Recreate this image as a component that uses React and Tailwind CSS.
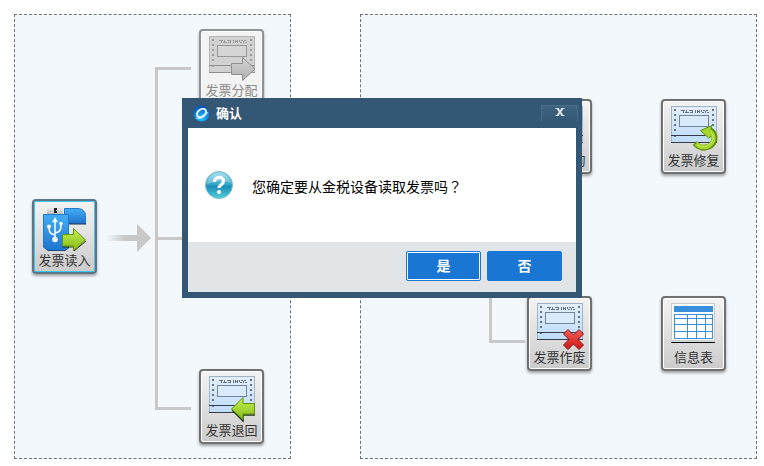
import React from "react";

const HOLES = [8, 13, 18, 23, 28];

function InvoiceSheet({ muted }) {
  const line = muted ? "#8f8f8f" : "#383c48";
  const mark = muted ? "#9c9c9c" : "#687282";
  return (
    <g shapeRendering="crispEdges">
      <rect x="10.5" y="5.5" width="45" height="36" fill={muted ? "#d2d2d2" : "url(#sheet)"} stroke={muted ? "#b5b5b5" : "#9fb2c9"} />
      {HOLES.map((y) => (
        <g key={y} fill={mark}>
          <rect x="13" y={y} width="2" height="2" />
          <rect x="51" y={y} width="2" height="2" />
        </g>
      ))}
      <rect x="13" y="35" width="2" height="1" fill={mark} />
      <path d="M20 9h4v1h-4zM22 10h1v2h-1zM24 11h4v1h-4zM25 9h1v2h-1zM28 9h3v1h-3zM29 11h3v1h-3zM31 9h1v2h-1zM34 9h1v3h-1zM36 9h1v3h-1zM37 10h1v1h-1zM38 9h1v3h-1zM40 9h1v2h-1zM41 11h2v1h-2zM42 9h2v1h-2zM44 10h1v2h-1zM45 9h2v1h-2zM46 11h2v1h-2z" fill={mark} />
      <rect x="18.5" y="14.5" width="29" height="11" fill={muted ? "#d6d6d6" : "#d9eafc"} stroke={muted ? "#989898" : "#74849a"} />
      <path d="M10 34.5h46M10 41.5h46" stroke={line} />
    </g>
  );
}

function Icon({ kind }) {
  return (
    <svg width="65" height="50" viewBox="0 0 65 50" className="block overflow-visible" aria-hidden="true">
      {["assign", "return", "void", "repair", "query"].includes(kind) && <InvoiceSheet muted={kind === "assign"} />}
      {kind === "assign" && (
        <path d="M32.5 32.5h11v-6L56 38 43.500 49.500v-6h-11z" fill="url(#grayArrow)" stroke="#8f8f8f" />
      )}
      {kind === "return" && (
        <g>
          <path d="M33 39l11 11v-6h12" fill="none" stroke="#26331a" strokeWidth="1.500" />
          <path d="M55.500 32.500H44v-6L32.500 38 44 48.500v-5.500h11.500z" fill="url(#green)" stroke="#5f930c" />
        </g>
      )}
      {kind === "void" && (
        <path d="M41 31.500l5.500 5.500 5.500-5.500 4.500 4.500-5.500 5.500 5.500 5.500-4.500 4.500-5.500-5.500-5.500 5.500-4.500-4.500 5.500-5.500-5.500-5.500z" fill="url(#red)" stroke="#8c1010" strokeLinejoin="round" />
      )}
      {kind === "repair" && (
        <g fill="none" strokeLinejoin="round">
          <path d="M34 42c4 5 10 6 15 3 6-4 6-12 0-16" stroke="#5f8f10" strokeWidth="6" />
          <path d="M39.500 29.500L51 24.500l-1.500 4.500 1 6-3 2z" fill="#a5d62c" stroke="#5f8f10" />
          <path d="M35 42.500c4 4 9 5 13.500 2 5.500-4 5.500-11 0-15" stroke="#a5d62c" strokeWidth="4" />
          <path d="M37 44c4 3 9 2 12-1 4-4 4-8 1-12" stroke="#cdee66" strokeWidth="1" />
        </g>
      )}
      {kind === "table" && (
        <g shapeRendering="crispEdges">
          <rect x="10.500" y="5.500" width="43" height="37" fill="#fff" stroke="#c9cdc9" />
          <rect x="13" y="8" width="39" height="6" fill="#378fde" />
          <path d="M13.500 16.500h38v24h-38zM13 20.500h39M13 26.500h39M13 33.500h39M26.500 16v25M35.500 16v25M44.500 16v25" fill="none" stroke="#378fde" />
          <path d="M10 44.500h44" stroke="#000" />
        </g>
      )}
      {kind === "usb" && (
        <g>
          <path d="M15 6h16v9H15z" fill="url(#metal)" />
          <path d="M22 7h3v2h-1v1h1v2h-3z" fill="#222" />
          <path d="M36 22.500h18" stroke="#16304f" strokeWidth="2" />
          <path d="M32.500 7.500H46c4 0 7.500 3 7.500 7v7.500h-21z" fill="url(#blue)" stroke="#2179c9" />
          <path d="M11 42h26v5l-4 3H16l-5-4z" fill="#10294a" />
          <path d="M11.500 13.500h25V44c0 3-2 5-5 5h-14c-3 0-6-2-6-5z" fill="url(#blue)" stroke="#2179c9" />
          <g stroke="#fff" strokeWidth="1.500" fill="none">
            <path d="M23 20v18M23 34c-5-1-6-3-6-8M23 32c5-1 6-3 6-8" />
            <path d="M20.500 21L23 16.500l2.500 4.500zM15.500 24h3v3h-3z" fill="#fff" strokeWidth="0.500" />
            <circle cx="29" cy="22.500" r="1.500" fill="#fff" strokeWidth="0.500" />
            <circle cx="23" cy="38.500" r="2" fill="#fff" />
          </g>
          <path d="M30 46h12v4l12-10" fill="none" stroke="#26331a" />
          <path d="M30.500 33.500h11v-6l12 11.500-12 10.500v-4.500h-11z" fill="url(#green)" stroke="#5f930c" />
        </g>
      )}
    </svg>
  );
}

function IconDefs() {
  const ramps = [
    ["sheet", "#e3effb", "#bedcfb"],
    ["green", "#c8ee54", "#83bd15"],
    ["grayArrow", "#d6d6d6", "#adadad"],
    ["red", "#f3625c", "#cf1111"],
    ["blue", "#43adf4", "#1f76cf"],
    ["metal", "#f2f2f2", "#a9a9a9"],
  ];
  return (
    <svg width="0" height="0" className="absolute" aria-hidden="true">
      <defs>
        {ramps.map(([id, from, to]) => (
          <linearGradient key={id} id={id} x1="0" y1="0" x2="0" y2="1">
            <stop offset="0" stopColor={from} />
            <stop offset="1" stopColor={to} />
          </linearGradient>
        ))}
        <linearGradient id="fade" x1="0" y1="0" x2="1" y2="0">
          <stop offset="0" stopColor="#c8c8c8" stopOpacity="0" />
          <stop offset="0.600" stopColor="#c8c8c8" />
        </linearGradient>
        <radialGradient id="logo" cx="0.500" cy="0.800" r="0.800">
          <stop offset="0" stopColor="#25c3fb" />
          <stop offset="0.600" stopColor="#0d7fe0" />
          <stop offset="1" stopColor="#064cab" />
        </radialGradient>
        <linearGradient id="help" x1="0" y1="0" x2="0" y2="1">
          <stop offset="0" stopColor="#8fd9e8" />
          <stop offset="0.500" stopColor="#2fa3c6" />
          <stop offset="0.550" stopColor="#1b8cb8" />
          <stop offset="1" stopColor="#52d0dc" />
        </linearGradient>
      </defs>
    </svg>
  );
}

function Tile({ kind, label, active, disabled }) {
  const skin = active
    ? "border-[#5e7787] bg-linear-to-b from-[#f3f3f3] from-0% via-[#e2e2e2] via-45% to-[#cbcbcb] inset-ring-1 inset-ring-[#3fc4f3] text-[#333]"
    : disabled
      ? "border-[#8f9396] bg-[#f3f3f3] inset-ring-1 inset-ring-white text-[#8a8a8a]"
      : "border-[#707070] bg-linear-to-b from-[#f3f3f3] from-0% via-[#e2e2e2] via-45% to-[#cbcbcb] inset-ring-1 inset-ring-white text-[#333]";
  return (
    <button type="button" disabled={disabled} className={`h-[75px] w-[65px] shrink-0 rounded-[4px] border-2 shadow-[0_2px_3px_rgba(0,0,0,0.35)] ${skin}`}>
      <span className="-m-[2px] flex flex-col items-center pb-[2px]">
        <Icon kind={kind} />
        <span className="text-[13px] leading-5 whitespace-nowrap">{label}</span>
      </span>
    </button>
  );
}

const PANEL = "flex min-w-0 border border-dashed border-[#6f7377] bg-[#f3f8fd]";

function ConfirmDialog() {
  return (
    <div role="dialog" aria-labelledby="dialog-title" className="absolute inset-x-0 top-[98px] mx-auto w-[400px] bg-[#335775] px-[6px] pb-[6px]">
      <header className="flex h-[30px] items-center pl-[5px]">
        <svg width="17" height="17" viewBox="0 0 17 17" aria-hidden="true">
          <circle cx="8.500" cy="8.500" r="8" fill="url(#logo)" />
          <ellipse cx="8.500" cy="8" rx="5" ry="3.500" transform="rotate(-38 8.500 8)" fill="none" stroke="#fff" strokeWidth="1.800" />
          <path d="M3 13c4 2 9-1 12-6" fill="none" stroke="#bdeeff" />
        </svg>
        <h1 id="dialog-title" className="ml-[6px] flex-1 pt-[2px] text-[13px] leading-5 font-bold text-white">确认</h1>
        <button type="button" aria-label="关闭" className="-mr-[2px] flex h-4 w-[37px] items-center justify-center border-x border-t border-[#4b6d88] bg-linear-to-b from-[#40637f] to-[#335775]">
          <svg width="10" height="8" viewBox="0 0 10 8" className="-mt-1" aria-hidden="true">
            <path d="M0.500 0.500h3.500M6 0.500h3.500M0.500 7.500h3.500M6 7.500h3.500" stroke="#dde3e8" />
            <path d="M2.500 0.500l5 7M7.500 0.500l-5 7" stroke="#dde3e8" strokeWidth="2" />
          </svg>
        </button>
      </header>
      <div className="flex h-[114px] items-center bg-white pl-4">
        <svg width="30" height="30" viewBox="0 0 30 30" aria-hidden="true">
          <circle cx="15" cy="15" r="13.500" fill="url(#help)" stroke="#78bfd2" />
          <path d="M3 14C4 6 9 3 15 3s11 4 12 10c-8-3-16-2-24 1z" fill="#fff" opacity="0.250" />
          <path d="M10.500 12c0-6 9-6 9-1 0 4-4.500 3.500-4.500 7" fill="none" stroke="#fff" strokeWidth="3.200" />
          <circle cx="15" cy="22" r="2" fill="#fff" />
        </svg>
        <p className="ml-[18px] pt-[2px] text-[14px] leading-5 text-black">
          您确定要从金税设备读取发票吗<span className="font-['Noto_Sans_CJK_TC',sans-serif]" lang="zh-TW">？</span>
        </p>
      </div>
      <footer className="flex h-[50px] items-center justify-end gap-[6px] bg-[#e1e5e8] pr-[14px] pb-[2px]">
        <button type="button" className="h-[30px] w-[75px] rounded-[2px] border border-[#1976d2] bg-[#1976d2] text-[14px] leading-5 font-bold text-white inset-ring-1 inset-ring-white">是</button>
        <button type="button" className="h-[30px] w-[75px] rounded-[2px] border border-[#1976d2] bg-[#1976d2] text-[14px] leading-5 font-bold text-white">否</button>
      </footer>
    </div>
  );
}

export default function App() {
  return (
    <div lang="zh-CN" className="relative min-h-screen bg-white py-[14px] pr-[7px] pl-[14px] font-['Liberation_Sans','Noto_Sans_CJK_SC',sans-serif]">
      <IconDefs />
      <main className="grid grid-cols-[277fr_397fr] gap-[69px]">
        <section className={`${PANEL} h-[445px] items-center pl-[17px]`}>
          <Tile kind="usb" label="发票读入" active />
          <svg width="46" height="28" viewBox="0 0 46 28" className="mt-[3px] ml-[9px] shrink-0" aria-hidden="true">
            <rect y="11" width="32" height="6" fill="url(#fade)" />
            <path d="M31 0l14 14-14 14z" fill="#c8c8c8" />
          </svg>
          <svg width="36" height="345" viewBox="0 0 36 345" className="mt-1 ml-[3px] shrink-0" aria-hidden="true">
            <path d="M36 2.500H1.500v340H36M1 172.500h35" fill="none" stroke="#c8c8c8" strokeWidth="3" />
          </svg>
          <div className="ml-2 flex flex-col justify-between self-stretch py-[14px]">
            <Tile kind="assign" label="发票分配" disabled />
            <Tile kind="return" label="发票退回" />
          </div>
        </section>
        <section className={`${PANEL} h-[445px] items-start justify-end pt-[84px] pr-[30px]`}>
          <svg width="36" height="246" viewBox="0 0 36 246" className="mr-[2px] shrink-0" aria-hidden="true">
            <path d="M36 38.500H1.500v204H36" fill="none" stroke="#c8c8c8" strokeWidth="3" />
          </svg>
          <div className="grid grid-cols-[65px_65px] gap-x-[69px] gap-y-[122px]">
            <Tile kind="query" label="发票查询" />
            <Tile kind="repair" label="发票修复" />
            <Tile kind="void" label="发票作废" />
            <Tile kind="table" label="信息表" />
          </div>
        </section>
      </main>
      <ConfirmDialog />
    </div>
  );
}
